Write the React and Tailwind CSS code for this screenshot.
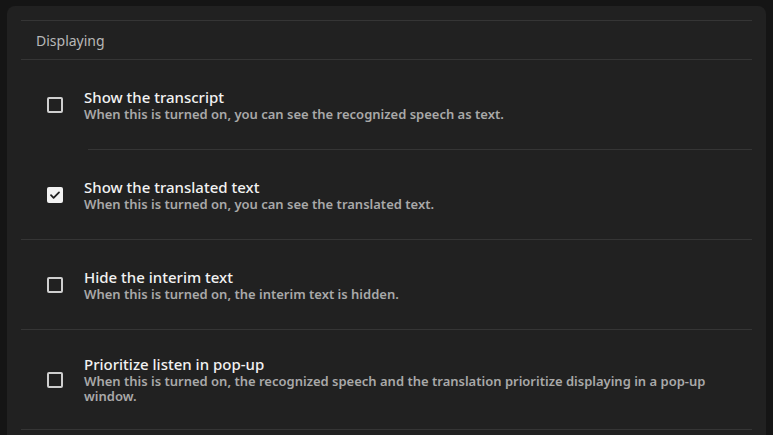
import React, { useState } from 'react';

const options = [
  {
    id: 'transcript',
    title: 'Show the transcript',
    description: 'When this is turned on, you can see the recognized speech as text.',
    checked: false,
    indentDivider: true,
  },
  {
    id: 'translated',
    title: 'Show the translated text',
    description: 'When this is turned on, you can see the translated text.',
    checked: true,
  },
  {
    id: 'interim',
    title: 'Hide the interim text',
    description: 'When this is turned on, the interim text is hidden.',
    checked: false,
  },
  {
    id: 'popup',
    title: 'Prioritize listen in pop-up',
    description:
      'When this is turned on, the recognized speech and the translation prioritize displaying in a pop-up window.',
    checked: false,
  },
];

function Checkbox({ checked, onChange }) {
  return (
    <button
      type="button"
      onClick={onChange}
      className={
        checked
          ? 'w-4 h-4 shrink-0 rounded-[2px] bg-[#f2f2f2] flex items-center justify-center'
          : 'w-4 h-4 shrink-0 rounded-[2px] border-2 border-[#cfcfcf]'
      }
    >
      {checked && (
        <svg width="12" height="12" viewBox="0 0 12 12" fill="none">
          <path d="M2 6.2l2.6 2.6L10 3.4" stroke="#1e1e1e" strokeWidth="1.8" strokeLinecap="round" strokeLinejoin="round" />
        </svg>
      )}
    </button>
  );
}

function OptionRow({ option, onToggle }) {
  return (
    <div>
      <div className="min-h-[89px] flex items-center gap-[21px] pl-[26px] pr-10 py-[25px]">
        <Checkbox checked={option.checked} onChange={onToggle} />
        <div className="flex flex-col">
          <span className="text-[15px] leading-[19px] font-medium text-[#f2f2f2]">{option.title}</span>
          <span className="text-[13px] leading-[15px] font-semibold text-[#a9a9a9]">{option.description}</span>
        </div>
      </div>
      <div className={option.indentDivider ? 'h-px bg-[#353535] ml-[67px]' : 'h-px bg-[#353535]'} />
    </div>
  );
}

export default function App() {
  const [items, setItems] = useState(options);

  const toggle = (id) => {
    setItems(items.map((it) => (it.id === id ? { ...it, checked: !it.checked } : it)));
  };

  return (
    <div
      className="h-[435px] w-[773px] overflow-hidden bg-[#151515] pl-[7px] pt-[6px]"
      style={{ fontFamily: '"Noto Sans", "Open Sans", sans-serif' }}
    >
      <div className="w-[759px] h-[460px] rounded-[8px] bg-[#212121] px-[14px] pt-[14px]">
        <div className="border-y border-[#353535] h-[40px] flex items-center pl-[15px]">
          <span className="text-[14px] text-[#b8b8b8]">Displaying</span>
        </div>
        {items.map((opt) => (
          <OptionRow key={opt.id} option={opt} onToggle={() => toggle(opt.id)} />
        ))}
      </div>
    </div>
  );
}
